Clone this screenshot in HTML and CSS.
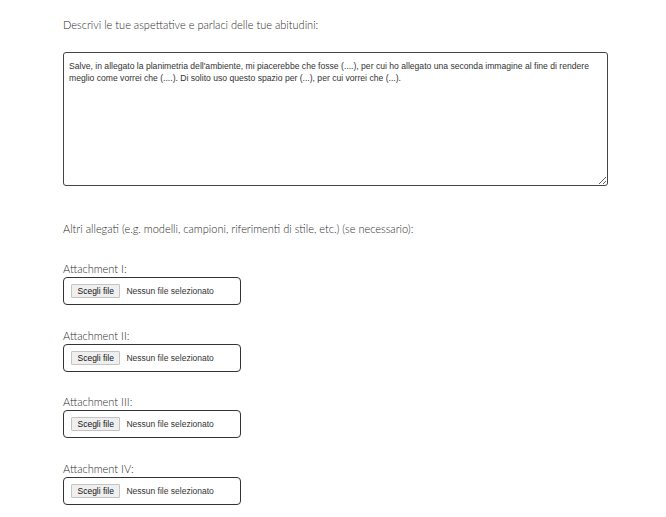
FILE: index.html
```html
<!DOCTYPE html>
<html lang="it">
<head>
    <meta charset="UTF-8">
    <meta name="viewport" content="width=device-width, initial-scale=1.0">
    <title>Richiesta progetto</title>
    <link rel="stylesheet" href="styles.css">
</head>
<body>
    <form class="form">
        <div class="field">
            <label class="label" for="note">Descrivi le tue aspettative e parlaci delle tue abitudini:</label>
            <textarea id="note" class="textarea">Salve, in allegato la planimetria dell'ambiente, mi piacerebbe che fosse (....), per cui ho allegato una seconda immagine al fine di rendere meglio come vorrei che (....). Di solito uso questo spazio per (...), per cui vorrei che (...).</textarea>
        </div>

        <p class="section-title">Altri allegati (e.g. modelli, campioni, riferimenti di stile, etc.) (se necessario):</p>

        <div class="attachment">
            <span class="label">Attachment I:</span>
            <label class="file-box">
                <input type="file" class="file-input">
                <span class="file-button">Scegli file</span>
                <span class="file-name">Nessun file selezionato</span>
            </label>
        </div>

        <div class="attachment">
            <span class="label">Attachment II:</span>
            <label class="file-box">
                <input type="file" class="file-input">
                <span class="file-button">Scegli file</span>
                <span class="file-name">Nessun file selezionato</span>
            </label>
        </div>

        <div class="attachment">
            <span class="label">Attachment III:</span>
            <label class="file-box">
                <input type="file" class="file-input">
                <span class="file-button">Scegli file</span>
                <span class="file-name">Nessun file selezionato</span>
            </label>
        </div>

        <div class="attachment">
            <span class="label">Attachment IV:</span>
            <label class="file-box">
                <input type="file" class="file-input">
                <span class="file-button">Scegli file</span>
                <span class="file-name">Nessun file selezionato</span>
            </label>
        </div>
    </form>
</body>
</html>
```

FILE: styles.css
```css
body {
    margin: 0;
    background: #ffffff;
    color: #2b2b2b;
    font-family: 'Lato', 'Noto Sans', sans-serif;
    font-weight: 300;
}

.form {
    padding: 18px 0 0 63px;
}

.label {
    display: block;
    font-size: 11px;
    line-height: 14px;
    color: #2b2b2b;
}

.field .label {
    margin-bottom: 20px;
}

.textarea {
    display: block;
    box-sizing: border-box;
    width: 545px;
    height: 134px;
    margin: 0;
    padding: 7px 5px;
    border: 1px solid #444444;
    border-radius: 3px;
    font-family: 'Liberation Sans', Arial, sans-serif;
    font-size: 8.6px;
    line-height: 12px;
    color: #333333;
    resize: vertical;
}

.section-title {
    margin: 36px 0 0;
    font-size: 11px;
    line-height: 14px;
}

.attachment {
    margin-top: 26px;
}

.attachment + .attachment {
    margin-top: 23.5px;
}

.file-box {
    box-sizing: border-box;
    display: flex;
    align-items: center;
    width: 178px;
    height: 28px;
    margin-top: 1px;
    padding: 0 7px;
    border: 1px solid #333333;
    border-radius: 4px;
    font-family: 'Liberation Sans', Arial, sans-serif;
    font-size: 8.5px;
    font-weight: 400;
    cursor: pointer;
}

.file-input {
    display: none;
}

.file-button {
    box-sizing: border-box;
    height: 14px;
    line-height: 12px;
    padding: 0 5.5px;
    margin-right: 6px;
    background: #efefef;
    border: 1px solid #c4c4c4;
    border-radius: 1px;
    color: #111111;
}

.file-name {
    color: #333333;
}
```
